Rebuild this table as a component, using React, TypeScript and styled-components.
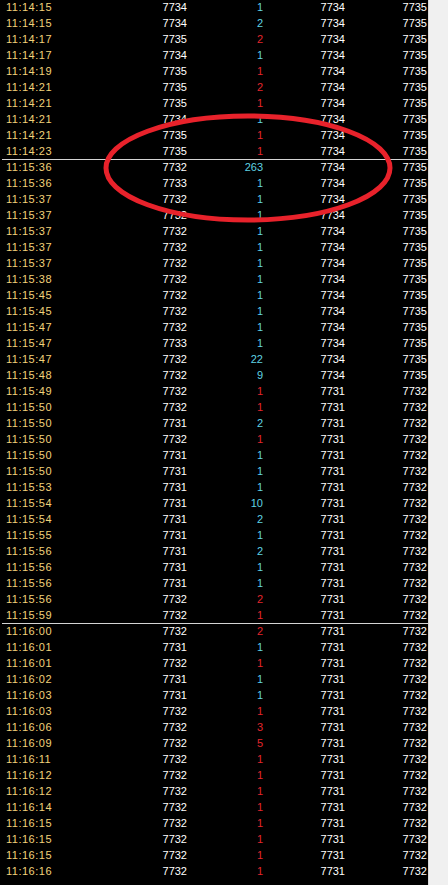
import styled, { createGlobalStyle } from "styled-components"

const GlobalStyle = createGlobalStyle`
  html, body {
    margin: 0;
    padding: 0;
    background: #f0f0f0;
  }
  body {
    font-family: "Liberation Sans", Arial, sans-serif;
  }
`

type Side = "up" | "down"

type Tick = {
  time: string
  price: string
  vol: string
  side: Side
  bid: string
  ask: string
  split?: boolean
}

// "|" marks the row that starts a new block (drawn with a rule above it)
const raw = `
11:14:15 7734 1 u 7734 7735
11:14:15 7734 2 u 7734 7735
11:14:17 7735 2 d 7734 7735
11:14:17 7734 1 u 7734 7735
11:14:19 7735 1 d 7734 7735
11:14:21 7735 2 d 7734 7735
11:14:21 7735 1 d 7734 7735
11:14:21 7734 1 u 7734 7735
11:14:21 7735 1 d 7734 7735
11:14:23 7735 1 d 7734 7735
|11:15:36 7732 263 u 7734 7735
11:15:36 7733 1 u 7734 7735
11:15:37 7732 1 u 7734 7735
11:15:37 7732 1 u 7734 7735
11:15:37 7732 1 u 7734 7735
11:15:37 7732 1 u 7734 7735
11:15:37 7732 1 u 7734 7735
11:15:38 7732 1 u 7734 7735
11:15:45 7732 1 u 7734 7735
11:15:45 7732 1 u 7734 7735
11:15:47 7732 1 u 7734 7735
11:15:47 7733 1 u 7734 7735
11:15:47 7732 22 u 7734 7735
11:15:48 7732 9 u 7734 7735
11:15:49 7732 1 d 7731 7732
11:15:50 7732 1 d 7731 7732
11:15:50 7731 2 u 7731 7732
11:15:50 7732 1 d 7731 7732
11:15:50 7731 1 u 7731 7732
11:15:50 7731 1 u 7731 7732
11:15:53 7731 1 u 7731 7732
11:15:54 7731 10 u 7731 7732
11:15:54 7731 2 u 7731 7732
11:15:55 7731 1 u 7731 7732
11:15:56 7731 2 u 7731 7732
11:15:56 7731 1 u 7731 7732
11:15:56 7731 1 u 7731 7732
11:15:56 7732 2 d 7731 7732
11:15:59 7732 1 d 7731 7732
|11:16:00 7732 2 d 7731 7732
11:16:01 7731 1 u 7731 7732
11:16:01 7732 1 d 7731 7732
11:16:02 7731 1 u 7731 7732
11:16:03 7731 1 u 7731 7732
11:16:03 7732 1 d 7731 7732
11:16:06 7732 3 d 7731 7732
11:16:09 7732 5 d 7731 7732
11:16:11 7732 1 d 7731 7732
11:16:12 7732 1 d 7731 7732
11:16:12 7732 1 d 7731 7732
11:16:14 7732 1 d 7731 7732
11:16:15 7732 1 d 7731 7732
11:16:15 7732 1 d 7731 7732
11:16:15 7732 1 d 7731 7732
11:16:16 7732 1 d 7731 7732
`

const ticks: Tick[] = raw
  .trim()
  .split("\n")
  .map(line => {
    const split = line.startsWith("|")
    const [time, price, vol, s, bid, ask] = line.replace("|", "").split(" ")
    return { time, price, vol, side: s === "u" ? "up" : "down", bid, ask, split }
  })

const Window = styled.div`
  position: relative;
  display: grid;
  grid-template-columns: 428px 20px;
  width: 448px;
  height: 885px;
  overflow: hidden;
`

const Board = styled.div`
  padding-left: 2px;
  box-sizing: border-box;
  overflow: hidden;
  background: #000;
`

const List = styled.div`
  margin-top: -1px;
  display: flex;
  flex-direction: column;
`

const Row = styled.div<{ $split?: boolean }>`
  display: grid;
  grid-template-columns: 98px 87px 76px 82px 82px;
  height: 16px;
  line-height: 16px;
  font-size: 11px;
  color: #fff;
  box-shadow: ${p => (p.$split ? "inset 0 1px 0 #d4d4d4" : "none")};
`

const Time = styled.span`
  padding-left: 4px;
  color: #f2d27a;
  letter-spacing: 0.5px;
`

const Num = styled.span`
  text-align: right;
  white-space: nowrap;
`

const Vol = styled(Num)<{ $side: Side }>`
  color: ${p => (p.$side === "up" ? "#5fd3e3" : "#e3262c")};
`

const Scroll = styled.div`
  box-sizing: border-box;
  background: #f0f0f0;
  border-left: 1px solid #dadada;
`

const Mark = styled.svg`
  position: absolute;
  left: 0;
  top: 0;
  pointer-events: none;
`

export default function App() {
  return (
    <>
      <GlobalStyle />
      <Window>
        <Board>
          <List>
            {ticks.map((t, i) => (
              <Row key={i} $split={t.split}>
                <Time>{t.time}</Time>
                <Num>{t.price}</Num>
                <Vol $side={t.side}>{t.vol}</Vol>
                <Num>{t.bid}</Num>
                <Num>{t.ask}</Num>
              </Row>
            ))}
          </List>
        </Board>
        <Scroll />
        <Mark width="448" height="885" viewBox="0 0 448 885">
          <ellipse
            cx="248"
            cy="168"
            rx="142"
            ry="52"
            fill="none"
            stroke="#e8222b"
            strokeWidth="5"
          />
        </Mark>
      </Window>
    </>
  )
}
